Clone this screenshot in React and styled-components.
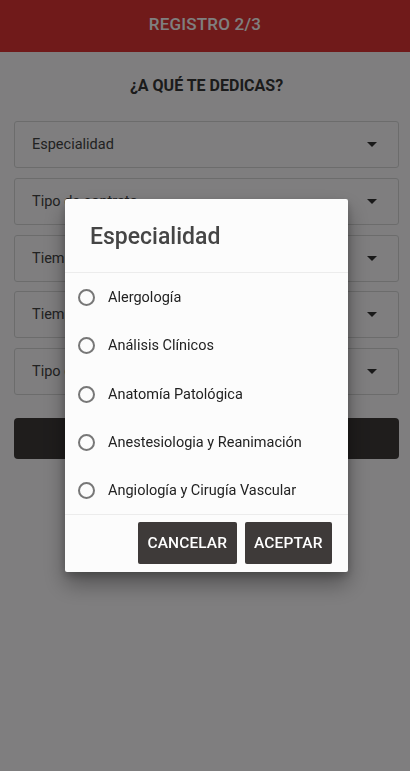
import styled, { createGlobalStyle } from "styled-components";
import { useState } from "react";

const GlobalStyle = createGlobalStyle`
  html, body {
    margin: 0;
    padding: 0;
    background: #fefdff;
    font-family: Roboto, "Liberation Sans", Arial, sans-serif;
  }
  * { box-sizing: border-box; }
`;

const Page = styled.div`
  min-height: 771px;
  background: #fefdff;
`;

const Header = styled.header`
  height: 52px;
  padding-bottom: 4px;
  background: #e13535;
  color: #ffffff;
  display: flex;
  align-items: center;
  justify-content: center;
  font-size: 17px;
  font-weight: 500;
  letter-spacing: 0.2px;
`;

const Content = styled.div`
  padding: 0 11px 0 14px;
  display: flex;
  flex-direction: column;
`;

const Title = styled.h2`
  margin: 24px 0 25px;
  text-align: center;
  font-size: 16px;
  font-weight: 700;
  color: #363636;
  line-height: 20px;
`;

const Fields = styled.div`
  display: flex;
  flex-direction: column;
  gap: 9.8px;
`;

const Field = styled.div`
  height: 47px;
  border: 1px solid #d9d9d9;
  border-radius: 3px;
  display: flex;
  align-items: center;
  justify-content: space-between;
  padding: 0 21px 0 17px;
  font-size: 14.5px;
  color: #444;
`;

const Caret = styled.span`
  width: 0;
  height: 0;
  border-left: 5px solid transparent;
  border-right: 5px solid transparent;
  border-top: 5px solid #333;
`;

const NextButton = styled.div`
  margin-top: 23px;
  height: 41px;
  border-radius: 4px;
  background: #3e3a39;
`;

const Overlay = styled.div`
  position: fixed;
  inset: 0;
  background: rgba(0, 0, 0, 0.5);
  display: flex;
  align-items: center;
  justify-content: center;
  padding-left: 3px;
`;

const Dialog = styled.div`
  width: 283px;
  background: #fcfcfc;
  border-radius: 2px;
  box-shadow: 0 12px 22px rgba(0, 0, 0, 0.35), 0 4px 8px rgba(0, 0, 0, 0.2);
  display: flex;
  flex-direction: column;
`;

const DialogTitle = styled.div`
  padding: 22px 25px 19px;
  font-size: 23px;
  font-weight: 500;
  line-height: 32px;
  color: #454545;
  border-bottom: 1.5px solid #ececec;
`;

const List = styled.div`
  display: flex;
  flex-direction: column;
  padding-top: 1px;
  border-bottom: 1.5px solid #ececec;
`;

const Option = styled.label`
  height: 48.2px;
  display: flex;
  align-items: center;
  gap: 13px;
  padding-left: 13px;
  font-size: 14.5px;
  color: #222;
  cursor: pointer;
`;

const Radio = styled.span`
  width: 17px;
  height: 17px;
  border-radius: 50%;
  border: 2px solid ${(p) => (p.$checked ? "#3e3a39" : "#777")};
  display: flex;
  align-items: center;
  justify-content: center;

  &::after {
    content: "";
    width: 7px;
    height: 7px;
    border-radius: 50%;
    background: ${(p) => (p.$checked ? "#3e3a39" : "transparent")};
  }
`;

const Actions = styled.div`
  display: flex;
  justify-content: flex-end;
  gap: 8px;
  padding: 7px 16px 8px;
`;

const ActionButton = styled.button`
  height: 42px;
  padding: 0 ${(p) => p.$pad}px;
  border: none;
  border-radius: 2px;
  background: #3e3a39;
  color: #fff;
  font-family: inherit;
  font-size: 15.5px;
  font-weight: 500;
  letter-spacing: 0.1px;
  cursor: pointer;
`;

const fields = ["Especialidad", "Tipo de contrato", "Tiempo", "Tiempo", "Tipo de"];

const options = [
  "Alergología",
  "Análisis Clínicos",
  "Anatomía Patológica",
  "Anestesiologia y Reanimación",
  "Angiología y Cirugía Vascular",
];

const App = () => {
  const [selected, setSelected] = useState(null);

  return (
    <>
      <GlobalStyle />
      <Page>
        <Header>REGISTRO 2/3</Header>
        <Content>
          <Title>¿A QUÉ TE DEDICAS?</Title>
          <Fields>
            {fields.map((f, i) => (
              <Field key={i}>
                <span>{f}</span>
                <Caret />
              </Field>
            ))}
          </Fields>
          <NextButton />
        </Content>
      </Page>

      <Overlay>
        <Dialog>
          <DialogTitle>Especialidad</DialogTitle>
          <List>
            {options.map((o) => (
              <Option key={o} onClick={() => setSelected(o)}>
                <Radio $checked={selected === o} />
                {o}
              </Option>
            ))}
          </List>
          <Actions>
            <ActionButton $pad={9.5}>CANCELAR</ActionButton>
            <ActionButton $pad={9.5}>ACEPTAR</ActionButton>
          </Actions>
        </Dialog>
      </Overlay>
    </>
  );
};

export default App;
